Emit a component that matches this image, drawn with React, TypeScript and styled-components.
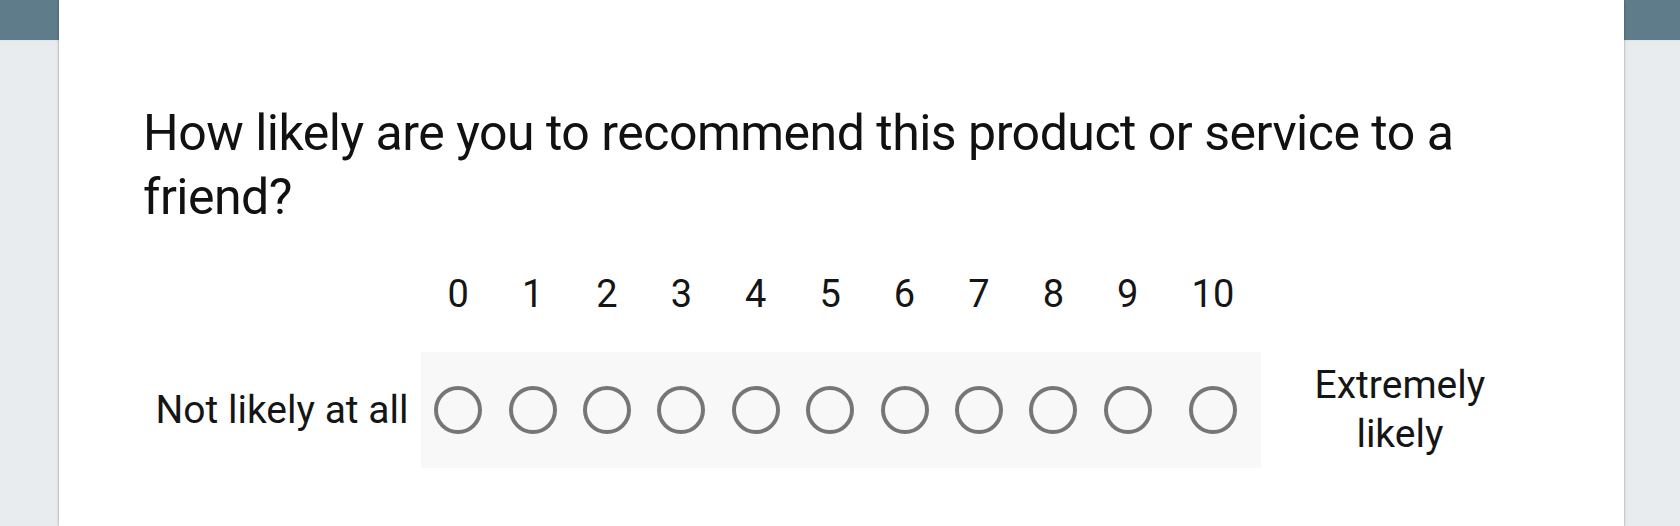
import React from "react";
import styled, { createGlobalStyle } from "styled-components";

const GlobalStyle = createGlobalStyle`
  html, body {
    margin: 0;
    padding: 0;
    overflow: hidden;
  }
  body {
    font-family: Roboto, "Liberation Sans", Arial, sans-serif;
    -webkit-font-smoothing: antialiased;
  }
`;

const Page = styled.div`
  height: 526px;
  overflow: hidden;
  display: flex;
  background: linear-gradient(
    to bottom,
    #5f7c8a 0,
    #5f7c8a 40px,
    #dfe4e8 40px,
    #e9ecef 42px,
    #e9ecef 100%
  );
`;

const Card = styled.main`
  margin-left: 59px;
  width: 1565px;
  min-height: 526px;
  background: #ffffff;
  box-shadow: 0 0 2px rgba(0, 0, 0, 0.28), 0 1px 4px rgba(0, 0, 0, 0.12);
  padding: 101px 84px 0 84px;
  box-sizing: border-box;
`;

const Question = styled.h1`
  margin: 0;
  font-family: Roboto, "Liberation Sans", Arial, sans-serif;
  font-weight: 400;
  font-size: 50px;
  line-height: 64px;
  color: #111111;
  letter-spacing: -0.5px;
`;

const Scale = styled.div`
  margin-top: 41px;
  display: flex;
  flex-direction: column;
  gap: 34px;
`;

const LABEL_W = 278;
const COLUMNS = "repeat(10, 74.4px) 96px";

const NumberRow = styled.div`
  margin-left: ${LABEL_W}px;
  display: grid;
  grid-template-columns: ${COLUMNS};
  height: 48px;
`;

const Number = styled.div`
  text-align: center;
  font-size: 38px;
  line-height: 48px;
  color: #151515;
`;

const RadioRow = styled.div`
  display: flex;
  align-items: center;
`;

const EndLabel = styled.div<{ $wrap?: boolean }>`
  width: ${LABEL_W}px;
  flex: none;
  box-sizing: border-box;
  padding: 0 ${(p) => (p.$wrap ? 36 : 0)}px;
  text-align: center;
  font-size: 39px;
  line-height: 49px;
  color: #151515;
  white-space: ${(p) => (p.$wrap ? "normal" : "nowrap")};
`;

const Track = styled.div`
  display: grid;
  grid-template-columns: ${COLUMNS};
  height: 116px;
  align-items: center;
  background: #f8f8f8;
`;

const RadioCell = styled.label`
  display: flex;
  justify-content: center;
  align-items: center;
  cursor: pointer;
`;

const Radio = styled.span`
  width: 48px;
  height: 48px;
  box-sizing: border-box;
  border: 4px solid #767676;
  border-radius: 50%;
  display: block;
`;

const values = [0, 1, 2, 3, 4, 5, 6, 7, 8, 9, 10];

export default function App() {
  return (
    <>
      <GlobalStyle />
      <Page>
        <Card>
          <Question>
            How likely are you to recommend this product or service to a friend?
          </Question>
          <Scale>
            <NumberRow>
              {values.map((v) => (
                <Number key={v}>{v}</Number>
              ))}
            </NumberRow>
            <RadioRow>
              <EndLabel>Not likely at all</EndLabel>
              <Track role="radiogroup">
                {values.map((v) => (
                  <RadioCell key={v} aria-label={String(v)}>
                    <Radio />
                  </RadioCell>
                ))}
              </Track>
              <EndLabel $wrap>Extremely likely</EndLabel>
            </RadioRow>
          </Scale>
        </Card>
      </Page>
    </>
  );
}
